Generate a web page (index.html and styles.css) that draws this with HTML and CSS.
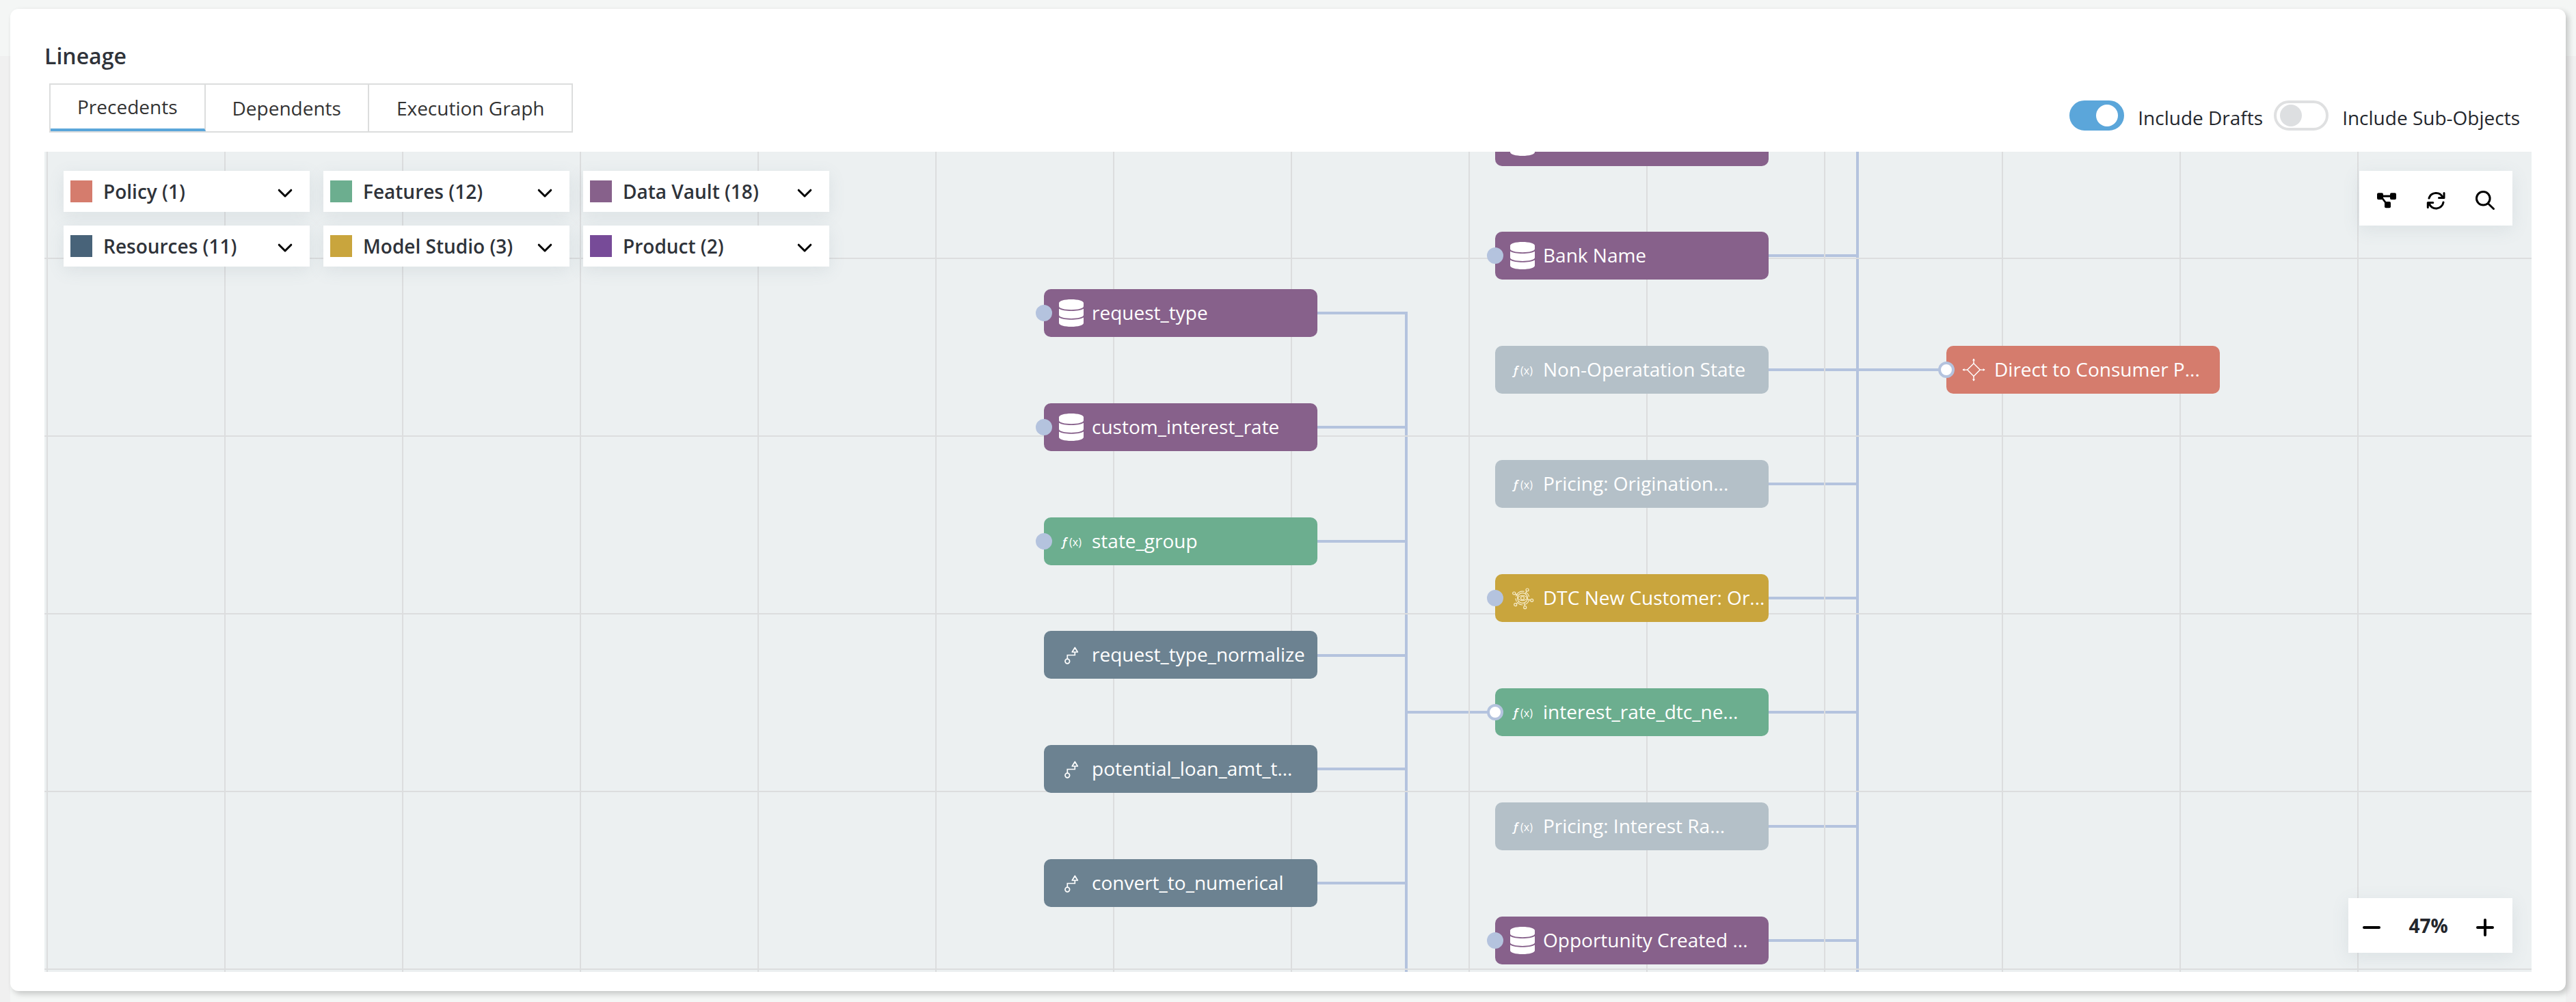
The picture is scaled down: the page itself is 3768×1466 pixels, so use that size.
FILE: index.html
```html
<!DOCTYPE html>
<html lang="en">
<head>
<meta charset="utf-8">
<title>Lineage</title>
<link rel="stylesheet" href="styles.css">
</head>
<body>
<svg class="sprite" aria-hidden="true">
  <symbol id="chevron" viewBox="0 0 32 32"><path d="M7.2 14.2l8.8 8.8 8.8-8.8" fill="none" stroke="currentColor" stroke-width="3" stroke-linecap="round" stroke-linejoin="round"/></symbol>
  <symbol id="database" viewBox="0 0 40 40">
    <path d="M2 5.5C2 2.200 10 0 20 0s18 2.200 18 5.500v4.500c0 3.200-8 5.200-18 5.200S2 13.200 2 10z"/>
    <path d="M2 13.800c4 2.300 10.500 3.300 18 3.300s14-1 18-3.300v9c0 3.200-8 5.200-18 5.200S2 26 2 22.800z"/>
    <path d="M2 26.400c4 2.300 10.500 3.300 18 3.300s14-1 18-3.300v8.100c0 3.300-8 5.500-18 5.500S2 37.800 2 34.500z"/>
  </symbol>
  <symbol id="branch" viewBox="0 0 40 40"><g fill="none" stroke="currentColor" stroke-width="1.700"><circle cx="14.300" cy="29.500" r="3.300"/><path d="M14.300 26V20.500H25.300V16"/><path d="M25.300 9.500l4 6.500h-8z" stroke-linejoin="round"/></g></symbol>
  <symbol id="target" viewBox="0 0 40 40"><g fill="none" stroke="currentColor" stroke-width="1.400"><path d="M20 10.800l9.300 9.300-9.300 9.300-9.300-9.300z"/><path d="M20 10.800V4M20 29.400V36M10.700 20.100H4M29.300 20.100H36"/></g><path d="M20 3.500l2 3h-4zM20 36.700l2-3h-4zM3.500 20.100l3-2v4zM36.700 20.100l-3-2v4z"/></symbol>
  <symbol id="model" viewBox="0 0 40 40"><g fill="none" stroke="currentColor" stroke-width="1.200">
    <path d="M10.300 17.600A10 10 0 0 1 22.500 10.400M25.300 11.700A10 10 0 0 1 29.700 18M29.600 22.800A10 10 0 0 1 23.500 29.400M20.500 30A10 10 0 0 1 13.500 27.500M11.500 25.300A10 10 0 0 1 10 20.500"/>
    <circle cx="20" cy="20" r="7.400"/><path d="M13 20c3.500-5 10.500-5 14 0-3.500 5-10.500 5-14 0z"/><circle cx="20" cy="20" r="2.500"/>
    <circle cx="27" cy="8" r="2"/><circle cx="7.700" cy="13" r="2"/><circle cx="9.700" cy="29.700" r="2"/><circle cx="23.700" cy="33.700" r="2"/><circle cx="33.700" cy="23.300" r="2"/>
    <path d="M26 9.800l-2 4M9.500 14l4 2.200M11.200 28.200l3-2.700M23.200 31.700l-.8-4.600M31.700 22.800l-4.600-1"/>
  </g></symbol>
</svg>
<main class="page">
  <section class="panel">
    <h1 class="panel-title">Lineage</h1>
    <header class="toolbar">
      <nav class="tabs">
        <button class="tab tab-active" type="button">Precedents</button>
        <button class="tab" type="button">Dependents</button>
        <button class="tab" type="button">Execution Graph</button>
      </nav>
      <div class="switches">
        <label class="switch"><input type="checkbox" checked>Include Drafts</label>
        <label class="switch"><input type="checkbox">Include Sub-Objects</label>
      </div>
    </header>

    <div class="canvas">
      <svg class="connectors" aria-hidden="true">
        <path d="M1862 236H1992V1300"/>
        <path d="M1862 403H1992M1862 570H1992M1862 737H1992M1862 903H1992M1862 1070H1992M1992 820H2122"/>
        <path d="M2652 0V1300"/>
        <path d="M2522 152H2652M2522 319H2782M2522 486H2652M2522 653H2652M2522 820H2652M2522 987H2652M2522 1154H2652"/>
      </svg>
      <div class="grid"></div>

      <div class="node vault" style="left:1462px;top:201px"><i class="port"></i><svg class="node-icon"><use href="#database"/></svg><span class="node-label">request_type</span></div>
      <div class="node vault" style="left:1462px;top:368px"><i class="port"></i><svg class="node-icon"><use href="#database"/></svg><span class="node-label">custom_interest_rate</span></div>
      <div class="node feature" style="left:1462px;top:535px"><i class="port"></i><span class="node-icon fx"><em>ƒ</em>(x)</span><span class="node-label">state_group</span></div>
      <div class="node resource" style="left:1462px;top:701px"><svg class="node-icon"><use href="#branch"/></svg><span class="node-label">request_type_normalize</span></div>
      <div class="node resource" style="left:1462px;top:868px"><svg class="node-icon"><use href="#branch"/></svg><span class="node-label">potential_loan_amt_t...</span></div>
      <div class="node resource" style="left:1462px;top:1035px"><svg class="node-icon"><use href="#branch"/></svg><span class="node-label">convert_to_numerical</span></div>

      <div class="node vault" style="left:2122px;top:-49px"><svg class="node-icon"><use href="#database"/></svg></div>
      <div class="node vault" style="left:2122px;top:117px"><i class="port"></i><svg class="node-icon"><use href="#database"/></svg><span class="node-label">Bank Name</span></div>
      <div class="node draft" style="left:2122px;top:284px"><span class="node-icon fx"><em>ƒ</em>(x)</span><span class="node-label">Non-Operatation State</span></div>
      <div class="node draft" style="left:2122px;top:451px"><span class="node-icon fx"><em>ƒ</em>(x)</span><span class="node-label">Pricing: Origination...</span></div>
      <div class="node model" style="left:2122px;top:618px"><i class="port"></i><svg class="node-icon"><use href="#model"/></svg><span class="node-label">DTC New Customer: Or...</span></div>
      <div class="node feature" style="left:2122px;top:785px"><i class="port port-open"></i><span class="node-icon fx"><em>ƒ</em>(x)</span><span class="node-label">interest_rate_dtc_ne...</span></div>
      <div class="node draft" style="left:2122px;top:952px"><span class="node-icon fx"><em>ƒ</em>(x)</span><span class="node-label">Pricing: Interest Ra...</span></div>
      <div class="node vault" style="left:2122px;top:1119px"><i class="port"></i><svg class="node-icon"><use href="#database"/></svg><span class="node-label">Opportunity Created ...</span></div>

      <div class="node policy" style="left:2782px;top:284px"><i class="port port-open"></i><svg class="node-icon"><use href="#target"/></svg><span class="node-label">Direct to Consumer P...</span></div>

      <div class="legend">
        <button class="legend-item" type="button"><i class="swatch policy"></i>Policy (1)<svg class="chevron"><use href="#chevron"/></svg></button>
        <button class="legend-item" type="button"><i class="swatch feature"></i>Features (12)<svg class="chevron"><use href="#chevron"/></svg></button>
        <button class="legend-item" type="button"><i class="swatch vault"></i>Data Vault (18)<svg class="chevron"><use href="#chevron"/></svg></button>
        <button class="legend-item" type="button"><i class="swatch resource-key"></i>Resources (11)<svg class="chevron"><use href="#chevron"/></svg></button>
        <button class="legend-item" type="button"><i class="swatch model"></i>Model Studio (3)<svg class="chevron"><use href="#chevron"/></svg></button>
        <button class="legend-item" type="button"><i class="swatch product"></i>Product (2)<svg class="chevron"><use href="#chevron"/></svg></button>
      </div>

      <div class="tools">
        <button class="tool" type="button" aria-label="Layout"><svg viewBox="0 0 32 32"><rect x="2" y="8.300" width="9" height="9.600" rx="2"/><rect x="21" y="8.300" width="9" height="9.600" rx="2"/><rect x="13" y="21" width="9" height="9.300" rx="2"/><path d="M8 13H24M8.500 14.500L16.500 25" stroke="currentColor" stroke-width="2.800"/></svg></button>
        <button class="tool" type="button" aria-label="Refresh"><svg viewBox="0 0 32 32"><path d="M6 16A10.700 10.700 0 0 1 26 14.800M28 8.500V15.500H20.500M27 22A10.700 10.700 0 0 1 6.200 23.500M4.300 29.500V22.500H11.800" fill="none" stroke="currentColor" stroke-width="3" stroke-linecap="round" stroke-linejoin="round"/></svg></button>
        <button class="tool" type="button" aria-label="Search"><svg viewBox="0 0 32 32"><circle cx="13.300" cy="16.300" r="9.800" fill="none" stroke="currentColor" stroke-width="3"/><path d="M20.700 24L28.500 31.500" stroke="currentColor" stroke-width="3" stroke-linecap="round"/></svg></button>
      </div>

      <div class="zoom">
        <button class="zoom-step" type="button" aria-label="Zoom out"><svg viewBox="0 0 32 32"><path d="M5 19H27" stroke="currentColor" stroke-width="4" stroke-linecap="round"/></svg></button>
        <output class="zoom-value">47%</output>
        <button class="zoom-step" type="button" aria-label="Zoom in"><svg viewBox="0 0 32 32"><path d="M5 19H27M16 8V30" stroke="currentColor" stroke-width="4" stroke-linecap="round"/></svg></button>
      </div>
    </div>
  </section>
</main>
</body>
</html>
```
FILE: styles.css
```css
* { box-sizing: border-box; }

body {
  margin: 0;
  background: #f4f6f5;
  color: #24272d;
  font-family: "Open Sans", "Noto Sans", sans-serif;
  font-size: 28px;
  line-height: 38px;
}

button {
  margin: 0;
  padding: 0;
  border: 0;
  background: none;
  color: inherit;
  font: inherit;
}

svg { display: block; overflow: visible; fill: currentColor; }
.sprite { position: absolute; width: 0; height: 0; }

.page {
  display: flex;
  min-height: 100vh;
  padding: 13px 15px 16px;
  background:
    linear-gradient(#f0f0f0, #f0f0f0) 0 82px / 15px 100% no-repeat,
    linear-gradient(#f0f0f0, #f0f0f0) 100% 82px / 15px 100% no-repeat;
}

.panel {
  display: flex;
  flex: 1;
  flex-direction: column;
  min-width: 0;
  padding: 47px 50px 28px;
  border-radius: 12px;
  background: #fff;
  box-shadow: 4px 4px 8px rgba(0, 0, 0, .2);
}

.panel-title {
  margin: 0 0 18px;
  color: #2f333a;
  font-size: 32px;
  font-weight: 600;
  line-height: 44px;
}

.toolbar {
  display: flex;
  align-items: flex-start;
  justify-content: space-between;
  padding: 0 17px 25px 7px;
}

.tabs {
  display: flex;
  height: 72px;
  border: 2px solid #dcdddd;
}

.tab {
  padding: 0 39px;
  border-right: 2px solid #dcdddd;
  color: #333;
}
.tab:last-child { padding: 0 40px; border-right: 0; }
.tab-active { border-bottom: 4px solid #5ba6da; }

.switches { display: flex; gap: 16px; padding-top: 25px; }
.switch { display: flex; gap: 20px; line-height: 50px; }
.switch input {
  display: flex;
  width: 80px;
  height: 44px;
  margin: 0;
  padding: 2px 5px;
  border: 4px solid #dfe0e1;
  border-radius: 22px;
  background: #fff;
  appearance: none;
}
.switch input::before {
  width: 32px;
  height: 32px;
  border-radius: 50%;
  background: #dddfe1;
  content: "";
}
.switch input:checked {
  justify-content: flex-end;
  border-color: #5ba6da;
  background: #5ba6da;
}
.switch input:checked::before { background: #fff; }

.canvas {
  position: relative;
  flex: 1;
  min-height: 1000px;
  overflow: hidden;
  background: #ecf0f1;
}

.connectors {
  position: absolute;
  inset: 0;
  width: 100%;
  height: 100%;
  fill: none;
  stroke: #b4c3de;
  stroke-width: 4;
}

.grid {
  position: absolute;
  inset: 0;
  background:
    linear-gradient(90deg, #dcddde 2px, transparent 2px) 3px 0 / 260px 260px,
    linear-gradient(#dcddde 2px, transparent 2px) 0 155px / 260px 260px;
}

.node {
  position: absolute;
  display: flex;
  align-items: center;
  gap: 10px;
  width: 400px;
  height: 70px;
  padding-left: 20px;
  border-radius: 10px;
  color: #fff;
  white-space: nowrap;
}
.node-icon { flex: none; width: 40px; height: 40px; }
.node-label { padding-bottom: 2px; }
.fx { font-size: 16px; line-height: 40px; text-align: center; }
.fx em { margin-right: 2px; font-size: 18px; font-weight: 600; }

.port {
  position: absolute;
  top: 23px;
  left: -12px;
  width: 24px;
  height: 24px;
  border: 4px solid #b4c3de;
  border-radius: 50%;
  background: #b4c3de;
}
.port-open { background: #fff; }

.policy { background-color: #d57c6d; }
.feature { background-color: #6cae8f; }
.vault { background-color: #87618b; }
.resource { background-color: #6c8291; }
.resource-key { background-color: #486379; }
.model { background-color: #c9a53d; }
.model .node-icon { color: #f6ecc9; }
.product { background-color: #774b98; }
.draft { background-color: #b4c0c8; }

.legend, .tools, .zoom { position: absolute; }
.legend-item, .tools, .zoom {
  background: #fff;
  box-shadow: 0 6px 24px rgba(96, 120, 140, .12);
}

.legend {
  top: 28px;
  left: 28px;
  display: grid;
  grid-template-columns: repeat(3, 360px);
  gap: 20px;
}
.legend-item {
  display: flex;
  align-items: center;
  height: 60px;
  padding: 0 20px 0 10px;
  color: #2f333a;
  font-weight: 600;
}
.swatch { width: 32px; height: 32px; margin-right: 16px; }
.chevron { width: 32px; height: 32px; margin-left: auto; color: #000; }

.tools {
  top: 28px;
  right: 28px;
  display: flex;
  height: 80px;
  padding: 0 4px;
}
.tool { display: grid; width: 72px; place-items: center; color: #000; }
.tool svg, .zoom-step svg { width: 32px; height: 32px; }

.zoom {
  right: 28px;
  bottom: 28px;
  display: flex;
  align-items: center;
  width: 240px;
  height: 80px;
  padding-right: 6px;
}
.zoom-step { display: grid; width: 68px; height: 80px; place-items: center; color: #000; }
.zoom-value { flex: 1; font-weight: 700; text-align: center; }
```
